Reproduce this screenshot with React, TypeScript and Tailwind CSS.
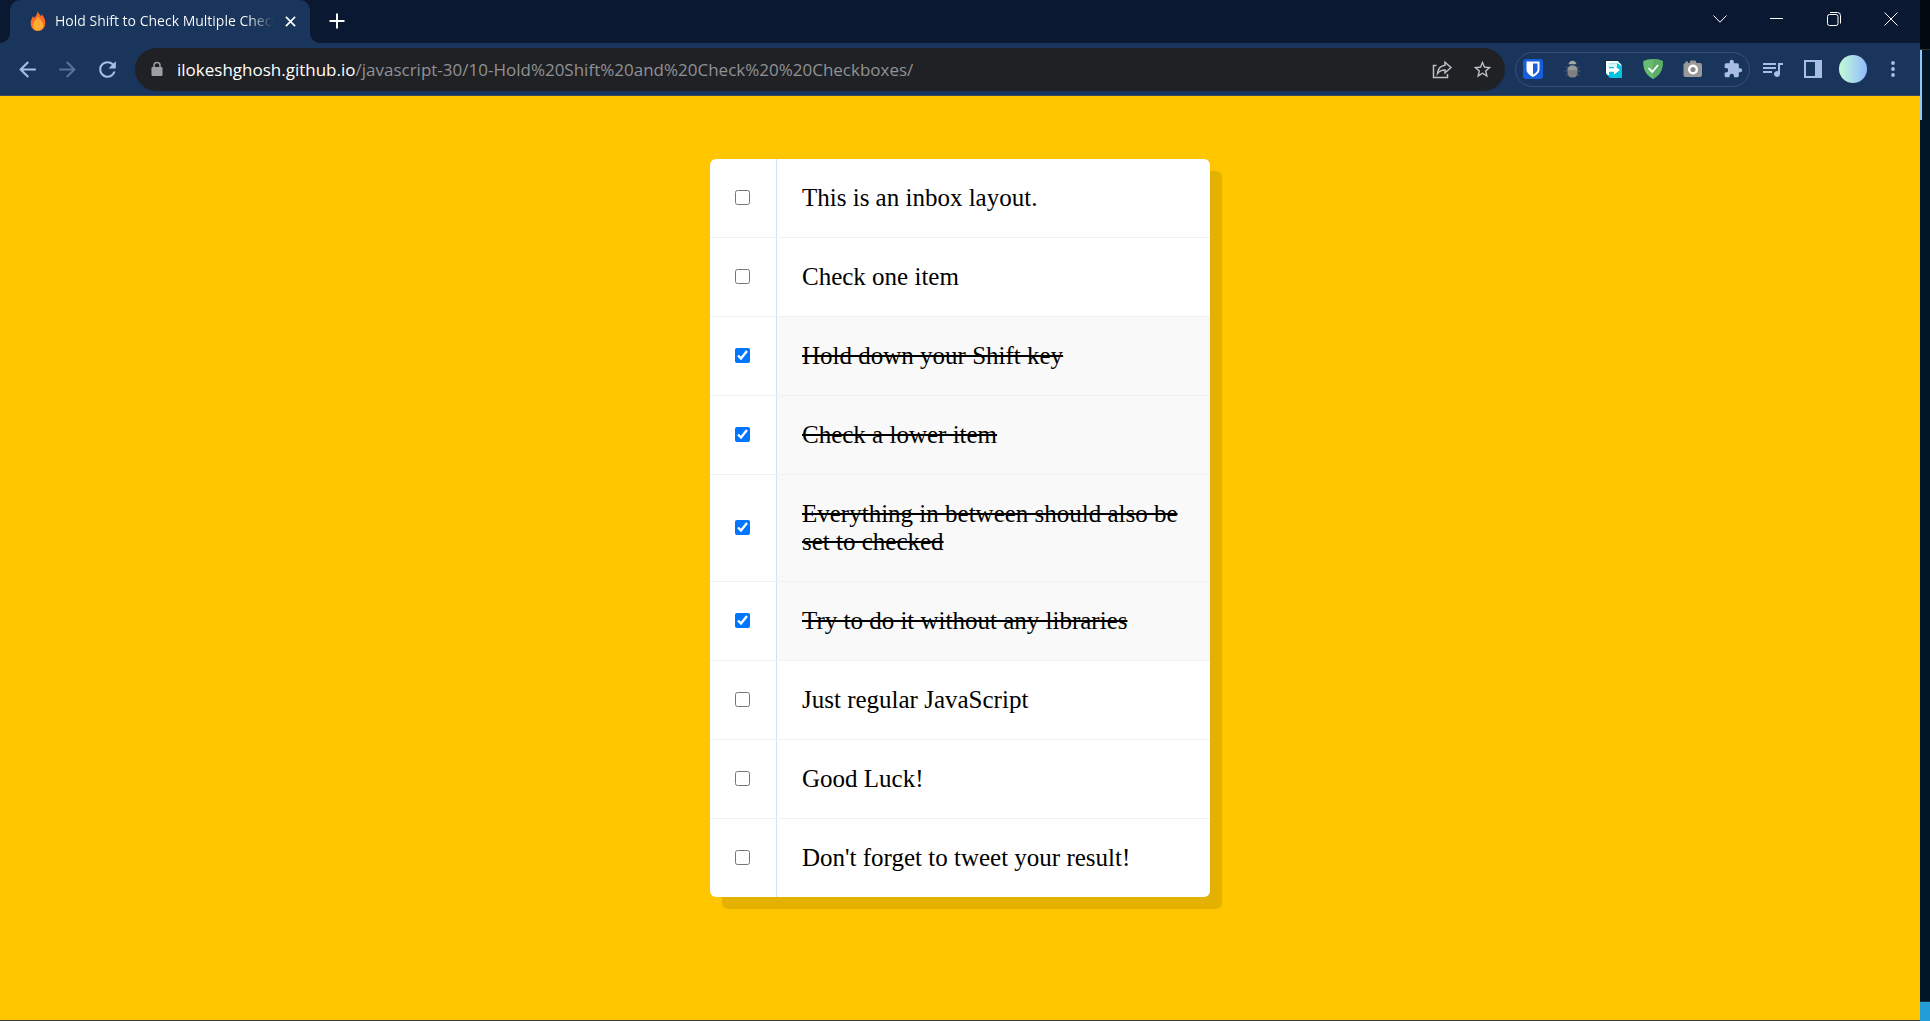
import { useRef, useState } from "react";
import type { MouseEvent, ReactNode } from "react";

type IconProps = { d: string; className: string };

function Glyph({ d, className }: IconProps) {
  return (
    <svg viewBox="0 0 24 24" fill="currentColor" className={className} aria-hidden="true">
      <path d={d} />
    </svg>
  );
}

const PATHS = {
  back: "M20 11H7.830l5.590-5.590L12 4l-8 8 8 8 1.410-1.410L7.830 13H20z",
  forward: "M4 13h12.170l-5.590 5.590L12 20l8-8-8-8-1.410 1.410L16.170 11H4z",
  reload:
    "M17.650 6.350A7.960 7.960 0 0 0 12 4a8 8 0 1 0 7.730 10h-2.080A6 6 0 1 1 12 6c1.660 0 3.140.690 4.220 1.780L13 11h7V4z",
  star: "M22 9.240l-7.190-.620L12 2 9.190 8.630 2 9.240l5.460 4.730L5.820 21 12 17.270 18.180 21l-1.630-7.030zM12 15.400l-3.760 2.270 1-4.280-3.320-2.880 4.380-.380L12 6.100l1.710 4.040 4.380.380-3.320 2.880 1 4.280z",
  puzzle:
    "M20.500 11H19V7a2 2 0 0 0-2-2h-4V3.500a2.500 2.500 0 0 0-5 0V5H4a2 2 0 0 0-2 2v3.800h1.500a2.700 2.700 0 0 1 0 5.400H2V20a2 2 0 0 0 2 2h3.800v-1.500a2.700 2.700 0 0 1 5.400 0V22H17a2 2 0 0 0 2-2v-4h1.500a2.500 2.500 0 0 0 0-5z",
  queue:
    "M15 6H2v2h13zm0 4H2v2h13zM2 16h9v-2H2zM17 6v8.180A3 3 0 1 0 19 17V8h3V6z",
};

const items = [
  "This is an inbox layout.",
  "Check one item",
  "Hold down your Shift key",
  "Check a lower item",
  "Everything in between should also be set to checked",
  "Try to do it without any libraries",
  "Just regular JavaScript",
  "Good Luck!",
  "Don't forget to tweet your result!",
];

function IconButton({ label, className, children }: { label: string; className: string; children: ReactNode }) {
  return (
    <button type="button" aria-label={label} className={`flex shrink-0 items-center justify-center ${className}`}>
      {children}
    </button>
  );
}

function TabStrip() {
  return (
    <div className="flex h-[43px] items-start bg-[#0a1931] pr-px text-white">
      <span className="size-[10px] self-end bg-[#1a355b]">
        <span className="block size-full rounded-br-[10px] bg-[#0a1931]" />
      </span>
      <div className="flex h-full w-[300px] items-center rounded-t-[10px] bg-[#1a355b] pr-2.5 pb-px pl-5">
        <svg viewBox="0 0 16 20" className="h-5 w-4 shrink-0" aria-hidden="true">
          <path d="M7.600 0c.6 2.200 2.300 3.400 3.300 5.200.5-.5.8-1.100.9-1.900C14 5.800 15.300 8.600 15.300 12c0 4.600-3 8-7.300 8S.7 16.800.7 12.200c0-3.200 1.500-5 2.300-7.200.5.6.8 1.200 1 2C6 5.400 7.400 3 7.600 0z" fill="#ff6a25" />
          <path d="M8 5.500c1 2 4.800 4.300 5.200 8.200.3 3.600-2.100 5.900-5.200 5.900s-5.400-2.300-5.200-5.700C3 10.700 6.800 8.500 8 5.500z" fill="#ffae33" />
        </svg>
        <span className="ml-[9px] min-w-0 flex-1 overflow-hidden bg-linear-to-r from-white from-[88%] to-transparent bg-clip-text font-['Open_Sans',sans-serif] text-sm whitespace-nowrap text-transparent">
          Hold Shift to Check Multiple Checkboxes
        </span>
        <IconButton label="Close tab" className="ml-1.5 size-5">
          <svg viewBox="0 0 12 12" className="size-[11px]" stroke="currentColor" strokeWidth="1.800" aria-hidden="true">
            <path d="M1 1l10 10M11 1L1 11" />
          </svg>
        </IconButton>
      </div>
      <span className="size-[10px] self-end bg-[#1a355b]">
        <span className="block size-full rounded-bl-[10px] bg-[#0a1931]" />
      </span>
      <IconButton label="New tab" className="h-[42px] w-[33px]">
        <svg viewBox="0 0 16 16" className="size-4" stroke="currentColor" strokeWidth="2" aria-hidden="true">
          <path d="M8 .5v15M.5 8h15" />
        </svg>
      </IconButton>
      <div className="ml-auto flex">
        <IconButton label="Search tabs" className="h-[37px] w-[57px]">
          <svg viewBox="0 0 14 8" className="h-2 w-3.5" fill="none" stroke="currentColor" aria-hidden="true">
            <path d="M.5.5L7 7.200 13.500.5" />
          </svg>
        </IconButton>
        <IconButton label="Minimize" className="h-[37px] w-[57px]">
          <span className="h-px w-[13px] bg-white" />
        </IconButton>
        <IconButton label="Restore" className="h-[37px] w-[57px]">
          <svg viewBox="0 0 14 14" className="size-3.5" fill="none" stroke="currentColor" aria-hidden="true">
            <rect x=".5" y="2.500" width="10.500" height="11" rx="2" />
            <path d="M3 .5h7.500a3 3 0 0 1 3 3v8" />
          </svg>
        </IconButton>
        <IconButton label="Close" className="h-[37px] w-[57px]">
          <svg viewBox="0 0 14 14" className="size-3.5" stroke="currentColor" aria-hidden="true">
            <path d="M.5.5l13 13M13.500.5l-13 13" />
          </svg>
        </IconButton>
      </div>
    </div>
  );
}

function Extensions() {
  return (
    <div className="ml-[10px] flex h-[35px] items-center gap-5 rounded-full border border-[#36507a] pr-1.5 pl-[7px]">
      <IconButton label="Bitwarden" className="size-5">
        <svg viewBox="0 0 20 20" className="size-5" aria-hidden="true">
          <rect width="20" height="20" rx="3" fill="#175ddc" />
          <path d="M3.500 2.500h13v8c0 4-4.500 6.300-6.500 7.500-2-1.200-6.500-3.500-6.500-7.500z" fill="#fff" />
          <path d="M10 4.500h4.500v6c0 2.600-3 4.200-4.500 5.200z" fill="#175ddc" />
        </svg>
      </IconButton>
      <IconButton label="Debugger" className="size-5">
        <svg viewBox="0 0 20 20" className="size-5" aria-hidden="true">
          <path d="M2.500 8l2.500 1M1.500 12h3.500M2.500 16.500l2.500-1M16.500 8L14 9M17.500 12H14M16.500 16.500l-2.500-1" stroke="#3f4e68" strokeWidth="1.400" />
          <path d="M5.500 5.200C6 3 7.300 1.800 9.500 1.800s3.500 1.200 4 3.400z" fill="#a5a5a5" />
          <rect x="4.500" y="6.500" width="10" height="12" rx="4.500" fill="#808080" />
          <path d="M4.600 11c0-6 9.800-6 9.800 0z" fill="#999" />
        </svg>
      </IconButton>
      <IconButton label="Page transfer" className="size-5">
        <svg viewBox="0 0 20 20" className="size-5" aria-hidden="true">
          <path d="M1 1h13v14H1z" fill="#10324d" />
          <path d="M3 2h12l4 4v13H7l-4-4z" fill="#00c3df" />
          <path d="M3 2h11.500l3.500 3.500V7l-3-2.500H6V16H5l-2-2z" fill="#fff" />
          <path d="M5 4.500h9V8H5z" fill="#d4f7fb" />
          <path d="M5.500 9.200h5.500V6.500l6 4.500-6 4.500v-2.700H5.500z" fill="#fff" />
        </svg>
      </IconButton>
      <IconButton label="Ad blocker" className="size-5">
        <svg viewBox="0 0 20 20" className="size-5" aria-hidden="true">
          <path d="M10 0c3.500 0 7 .7 9.800 2 0 7-1 13-9.800 18C1.200 15 .2 9 .2 2 3 .7 6.500 0 10 0z" fill="#68bc71" />
          <path d="M10 0c3.500 0 7 .7 9.800 2 0 7-1 13-9.800 18z" fill="#5bad66" />
          <path d="M5.500 9.200l3.800 3.800L15 6" fill="none" stroke="#fff" strokeWidth="1.800" />
        </svg>
      </IconButton>
      <IconButton label="Screen capture" className="size-5">
        <svg viewBox="0 0 20 20" className="size-5" aria-hidden="true">
          <path d="M2.500 4V2.500h2.500V4h1.500l1-2.500h5l1 2.500H17a2 2 0 0 1 2 2v10a2 2 0 0 1-2 2H2.500a2 2 0 0 1-2-2V6a2 2 0 0 1 2-2z" fill="#999" />
          <circle cx="10" cy="10.500" r="3.800" fill="#888" stroke="#fff" strokeWidth="2.400" />
        </svg>
      </IconButton>
      <IconButton label="Extensions" className="size-5 text-[#a8bfe3]">
        <Glyph d={PATHS.puzzle} className="size-5 shrink-0" />
      </IconButton>
    </div>
  );
}

function Toolbar() {
  return (
    <div className="flex h-[53px] items-center border-b border-[#3c4a5e] bg-[#1a355b] px-[7px] text-[#a8bfe3]">
      <IconButton label="Back" className="h-9 w-10">
        <Glyph d={PATHS.back} className="size-[25px]" />
      </IconButton>
      <IconButton label="Forward" className="h-9 w-10 text-[#58719a]">
        <Glyph d={PATHS.forward} className="size-[25px]" />
      </IconButton>
      <IconButton label="Reload" className="h-9 w-10">
        <Glyph d={PATHS.reload} className="size-[25px]" />
      </IconButton>
      <div className="ml-2 flex h-[43px] min-w-0 flex-1 items-center rounded-full bg-[#202124] pr-[3px] pl-4 text-[#bdc1c6]">
        <svg viewBox="0 0 12 16" className="h-4 w-3 shrink-0" aria-hidden="true">
          <rect x=".5" y="6" width="11" height="9" rx="1.200" fill="#9aa0a6" />
          <path d="M3 6.500V4.500a3 3 0 0 1 6 0v2" fill="none" stroke="#9aa0a6" strokeWidth="1.500" />
        </svg>
        <a
          href="#inbox"
          className="ml-[14px] min-w-0 flex-1 truncate pt-0.5 font-['Open_Sans',sans-serif] text-[17px] leading-6 text-[#8f9296]"
        >
          <span className="text-white">ilokeshghosh.github.io</span>
          /javascript-30/10-Hold%20Shift%20and%20Check%20%20Checkboxes/
        </a>
        <IconButton label="Share this page" className="h-9 w-10">
          <svg viewBox="0 0 20 20" className="size-5" fill="none" stroke="currentColor" strokeWidth="1.500" aria-hidden="true">
            <path d="M4.500 6.500H1.500v12h14V15" />
            <path d="M13 3.200l6 5.300-6 5.300V11c-3.500 0-5.700 1-7.500 3.500.4-4.500 3-7.700 7.500-8.300z" />
          </svg>
        </IconButton>
        <IconButton label="Bookmark this tab" className="h-9 w-10">
          <Glyph d={PATHS.star} className="size-[21px]" />
        </IconButton>
      </div>
      <Extensions />
      <IconButton label="Media controls" className="ml-[3px] h-9 w-10">
        <Glyph d={PATHS.queue} className="size-6" />
      </IconButton>
      <IconButton label="Side panel" className="h-9 w-10">
        <svg viewBox="0 0 18 18" className="size-[18px]" aria-hidden="true">
          <path fillRule="evenodd" d="M0 0h18v18H0zM2 2v14h9V2z" fill="currentColor" />
        </svg>
      </IconButton>
      <IconButton label="Profile" className="h-9 w-10">
        <span className="size-7 rounded-full bg-linear-to-r from-[#c4fbd2] to-[#92bafd]" />
      </IconButton>
      <IconButton label="Menu" className="h-9 w-10">
        <svg viewBox="0 0 4 18" className="h-[18px] w-1" fill="currentColor" aria-hidden="true">
          <circle cx="2" cy="3" r="1.900" />
          <circle cx="2" cy="9" r="1.900" />
          <circle cx="2" cy="15" r="1.900" />
        </svg>
      </IconButton>
    </div>
  );
}

function Inbox() {
  const [checked, setChecked] = useState(items.map((_, i) => i >= 2 && i <= 5));
  const last = useRef<number | null>(null);

  const toggle = (index: number, event: MouseEvent<HTMLInputElement>) => {
    const value = event.currentTarget.checked;
    const from = event.shiftKey && value && last.current !== null ? last.current : index;
    const [low, high] = [Math.min(from, index), Math.max(from, index)];
    setChecked((current) => current.map((state, i) => (i >= low && i <= high ? value : state)));
    last.current = index;
  };

  return (
    <ul
      id="inbox"
      className="w-full max-w-[500px] divide-y divide-[#f1f1f1] overflow-hidden rounded-md bg-white shadow-[12px_12px_0_rgba(0,0,0,0.1)]"
    >
      {items.map((text, i) => (
        <li key={text} className="flex items-stretch">
          <div className="flex w-[66px] shrink-0 items-center pb-0.5 pl-[25px]">
            <input
              id={`item-${i}`}
              type="checkbox"
              checked={checked[i]}
              onClick={(event) => toggle(i, event)}
              onChange={() => undefined}
              className="size-[15px] accent-[#0075ff]"
            />
          </div>
          <label
            htmlFor={`item-${i}`}
            className={`flex-1 border-l border-[#d1e2ff] p-[25px] font-['Liberation_Serif',serif] text-[25px] leading-7 text-black ${
              checked[i] ? "bg-[#f9f9f9] line-through" : ""
            }`}
          >
            {text}
          </label>
        </li>
      ))}
    </ul>
  );
}

export default function App() {
  return (
    <div className="flex min-h-screen bg-[#011627]">
      <div className="flex min-w-0 flex-1 flex-col border-b border-[#3a3a3a]">
        <header>
          <TabStrip />
          <Toolbar />
        </header>
        <main className="flex flex-1 items-start justify-center bg-[#ffc600] px-4 pt-[63px] pb-16">
          <Inbox />
        </main>
      </div>
      <aside className="flex w-[10px] shrink-0 flex-col" aria-hidden="true">
        <div className="h-[50px] border-b border-[#2f3233] bg-[#000a0f]" />
        <div className="h-[70px] border-l-2 border-[#8ec8f6]" />
        <div className="mt-auto h-5 border-t border-[#16314a] bg-[#239dd8]" />
      </aside>
    </div>
  );
}
